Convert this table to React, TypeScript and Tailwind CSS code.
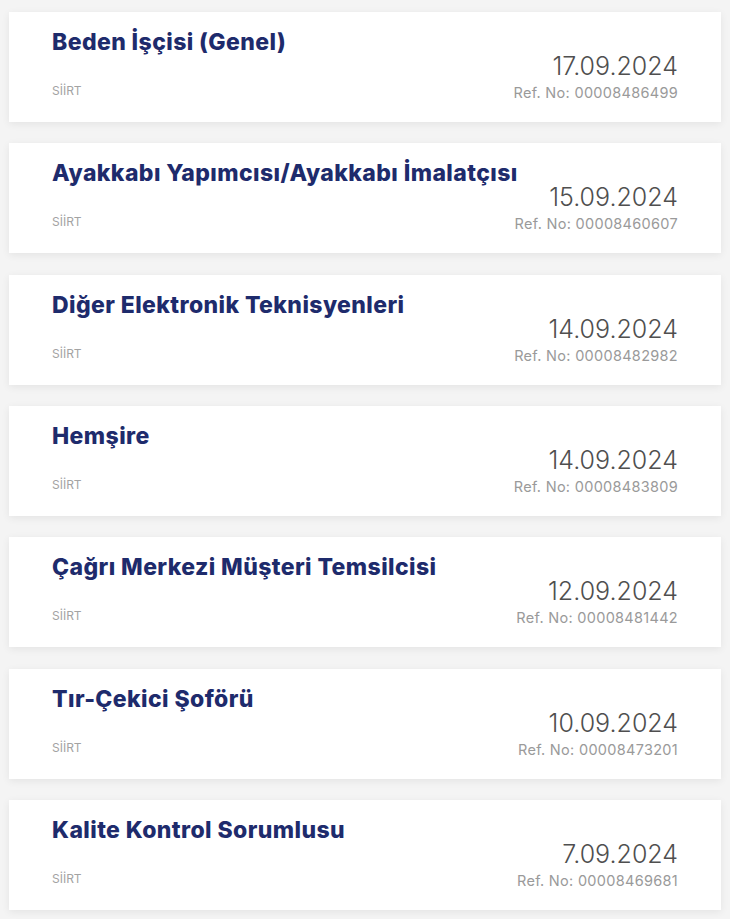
const jobs = [
  { title: 'Beden İşçisi (Genel)', date: '17.09.2024', ref: '00008486499' },
  { title: 'Ayakkabı Yapımcısı/Ayakkabı İmalatçısı', date: '15.09.2024', ref: '00008460607' },
  { title: 'Diğer Elektronik Teknisyenleri', date: '14.09.2024', ref: '00008482982' },
  { title: 'Hemşire', date: '14.09.2024', ref: '00008483809' },
  { title: 'Çağrı Merkezi Müşteri Temsilcisi', date: '12.09.2024', ref: '00008481442' },
  { title: 'Tır-Çekici Şoförü', date: '10.09.2024', ref: '00008473201' },
  { title: 'Kalite Kontrol Sorumlusu', date: '7.09.2024', ref: '00008469681' },
];

function JobCard({ title, date, ref }: { title: string; date: string; ref: string }) {
  return (
    <div className="bg-white h-[110px] px-[43px] pt-[16px] shadow-[0_2px_8px_rgba(0,0,0,0.07)]">
      <h2 className="text-[23px] leading-[28px] font-extrabold text-[#1e2b6c] tracking-[0.4px]">{title}</h2>
      <div className="flex justify-between items-end -mt-[5px]">
        <span className="text-[12px] text-[#a3a3a3] mb-[2px]">SİİRT</span>
        <div className="text-right">
          <div className="text-[25px] leading-[30px] font-light text-[#4f4f4f]">{date}</div>
          <div className="mt-[3px] text-[14.5px] leading-[18px] text-[#9a9a9a] tracking-[0.3px]">Ref. No: {ref}</div>
        </div>
      </div>
    </div>
  );
}

export default function App() {
  return (
    <div className="min-h-[919px] bg-[#f4f4f4] px-[9px] pt-[12px] pb-[10px] font-['Inter',sans-serif]">
      <div className="flex flex-col gap-[21.33px]">
        {jobs.map((j) => (
          <JobCard key={j.ref} {...j} />
        ))}
      </div>
    </div>
  );
}
